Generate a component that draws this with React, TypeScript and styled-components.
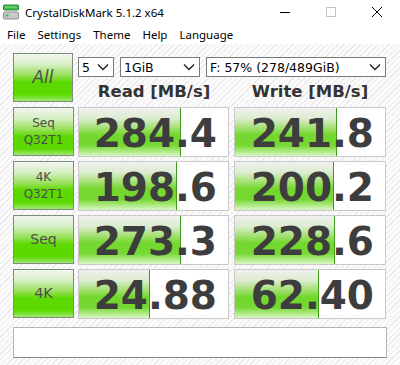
import React from "react";
import styled, { createGlobalStyle } from "styled-components";

const GlobalStyle = createGlobalStyle`
    html, body {
        margin: 0;
        padding: 0;
        background: #ffffff;
    }
    body {
        width: 400px;
        height: 365px;
        overflow: hidden;
        font-family: "Noto Sans", "DejaVu Sans", sans-serif;
    }
`;

const Window = styled.div`
    width: 400px;
    height: 365px;
    display: flex;
    flex-direction: column;
    background: #ffffff;
`;

const TitleBar = styled.div`
    height: 24px;
    display: flex;
    align-items: center;
    padding-left: 3px;
    color: #000;
    font-size: 11.5px;
`;

const AppTitle = styled.span`
    margin-left: 6px;
    flex: 1;
`;

const WinButton = styled.div`
    width: 46px;
    height: 24px;
    display: flex;
    align-items: center;
    justify-content: center;
`;

const MenuBar = styled.div`
    height: 20px;
    display: flex;
    align-items: center;
    font-size: 11.5px;
    padding-left: 1px;
`;

const MenuItem = styled.span`
    padding: 0 6px;
`;

const Panel = styled.div`
    flex: 1;
    padding: 9px 13px 0 13px;
    background-color: #fbfbfb;
    background-image: repeating-linear-gradient(
        135deg,
        #fbfbfb 0px,
        #fbfbfb 3px,
        #eaeaea 3px,
        #eaeaea 4px
    );
`;

const Grid = styled.div`
    display: grid;
    grid-template-columns: 61px 152px 152px;
    grid-auto-rows: 50px;
    column-gap: 4px;
    row-gap: 4px;
    & > :nth-child(3n + 1) {
        margin-right: 1px;
    }
`;

const SideButton = styled.div<{ $size: number; $italic?: boolean }>`
    box-sizing: border-box;
    height: 49px;
    border: 1px solid #7d8c7b;
    background: linear-gradient(
        to bottom,
        #f2f6ef 0%,
        #d6efc4 22%,
        #99e15c 45%,
        #5cd900 60%,
        #5cd900 86%,
        #9fe870 100%
    );
    display: flex;
    flex-direction: column;
    align-items: center;
    justify-content: center;
    color: #4e4e4e;
    font-family: "DejaVu Sans", sans-serif;
    font-size: ${(p) => p.$size}px;
    font-style: ${(p) => (p.$italic ? "italic" : "normal")};
    line-height: 1.4;
`;

const HeadArea = styled.div`
    grid-column: 2 / span 2;
    display: grid;
    grid-template-columns: 152px 152px;
    column-gap: 4px;
    grid-template-rows: 20px 1fr;
    padding-top: 4px;
`;

const ComboRow = styled.div`
    grid-column: 1 / span 2;
    display: flex;
    gap: 6px;
`;

const Combo = styled.div<{ $w: number }>`
    box-sizing: border-box;
    width: ${(p) => p.$w}px;
    height: 20px;
    border: 1px solid #7a7a7a;
    background: #ffffff;
    display: flex;
    align-items: center;
    padding-left: 3px;
    padding-right: 4px;
    font-family: "DejaVu Sans", sans-serif;
    font-size: 12.5px;
    color: #000;
    & > span {
        flex: 1;
        white-space: nowrap;
    }
`;

const ColHeader = styled.div`
    display: flex;
    align-items: center;
    justify-content: center;
    font-family: "DejaVu Sans", sans-serif;
    font-weight: bold;
    font-size: 16.5px;
    color: #333333;
    padding-top: 2px;
`;

const Cell = styled.div`
    position: relative;
    box-sizing: border-box;
    border: 1px solid #c9c9c9;
    background: #ffffff;
    display: flex;
    align-items: center;
    justify-content: flex-end;
    padding-right: 11px;
    overflow: hidden;
`;

const Fill = styled.div`
    position: absolute;
    left: 0;
    top: 0;
    bottom: 0;
    border-right: 1px solid #3f9a1a;
    background: linear-gradient(
        to bottom,
        #f0f0f0 0%,
        #dcecd0 22%,
        #a2e070 42%,
        #74d72e 56%,
        #76d833 78%,
        #b6ec90 92%,
        #d9f6c4 100%
    );
`;

const Value = styled.span`
    position: relative;
    font-family: "DejaVu Sans", sans-serif;
    font-weight: bold;
    font-size: 39px;
    color: #3d3d3d;
    line-height: 1;
    margin-top: 2px;
`;

const Comment = styled.div`
    box-sizing: border-box;
    margin-top: 8px;
    height: 31px;
    border: 1px solid #b4b4b4;
    border-bottom-color: #8a8a8a;
    background: #ffffff;
`;

const Chevron = () => (
    <svg width="12" height="8" viewBox="0 0 12 8">
        <path d="M1 1.5 L6 6.5 L11 1.5" fill="none" stroke="#222" strokeWidth="1.4" />
    </svg>
);

const DiskIcon = () => (
    <svg width="16" height="16" viewBox="0 0 16 16">
        <rect x="0.5" y="1" width="15" height="5" rx="1" fill="#3fb54a" stroke="#2c8a34" />
        <rect x="2" y="2.5" width="12" height="1.2" fill="#7fdc86" />
        <rect x="0.5" y="8" width="15" height="7" rx="1" fill="#c9c9c9" stroke="#8f8f8f" />
        <rect x="2.5" y="10.5" width="3" height="2" fill="#3fb54a" />
    </svg>
);

type Row = {
    label: string[];
    size: number;
    read: string;
    readPct: number;
    write: string;
    writePct: number;
};

const rows: Row[] = [
    { label: ["Seq", "Q32T1"], size: 12, read: "284.4", readPct: 68, write: "241.8", writePct: 67 },
    { label: ["4K", "Q32T1"], size: 12, read: "198.6", readPct: 65, write: "200.2", writePct: 65 },
    { label: ["Seq"], size: 14, read: "273.3", readPct: 68, write: "228.6", writePct: 66 },
    { label: ["4K"], size: 14.5, read: "24.88", readPct: 47, write: "62.40", writePct: 55 },
];

const menu = ["File", "Settings", "Theme", "Help", "Language"];

export default function App() {
    return (
        <>
            <GlobalStyle />
            <Window>
                <TitleBar>
                    <DiskIcon />
                    <AppTitle>CrystalDiskMark 5.1.2 x64</AppTitle>
                    <WinButton>
                        <svg width="12" height="12" viewBox="0 0 12 12">
                            <path d="M1 6.5 H11" stroke="#000" strokeWidth="1" />
                        </svg>
                    </WinButton>
                    <WinButton>
                        <svg width="12" height="12" viewBox="0 0 12 12">
                            <rect x="1.5" y="1.5" width="9" height="9" fill="none" stroke="#c4c4c4" />
                        </svg>
                    </WinButton>
                    <WinButton>
                        <svg width="12" height="12" viewBox="0 0 12 12">
                            <path d="M1 1 L11 11 M11 1 L1 11" stroke="#000" strokeWidth="1" />
                        </svg>
                    </WinButton>
                </TitleBar>
                <MenuBar>
                    {menu.map((m) => (
                        <MenuItem key={m}>{m}</MenuItem>
                    ))}
                </MenuBar>
                <Panel>
                    <Grid>
                        <SideButton $size={17} $italic>All</SideButton>
                        <HeadArea>
                            <ComboRow>
                                <Combo $w={36}><span>5</span><Chevron /></Combo>
                                <Combo $w={80}><span>1GiB</span><Chevron /></Combo>
                                <Combo $w={180}><span>F: 57% (278/489GiB)</span><Chevron /></Combo>
                            </ComboRow>
                            <ColHeader>Read [MB/s]</ColHeader>
                            <ColHeader>Write [MB/s]</ColHeader>
                        </HeadArea>
                        {rows.map((r) => (
                            <React.Fragment key={r.label.join("")}>
                                <SideButton $size={r.size}>
                                    {r.label.map((l) => (
                                        <span key={l}>{l}</span>
                                    ))}
                                </SideButton>
                                <Cell>
                                    <Fill style={{ width: `${r.readPct}%` }} />
                                    <Value>{r.read}</Value>
                                </Cell>
                                <Cell>
                                    <Fill style={{ width: `${r.writePct}%` }} />
                                    <Value>{r.write}</Value>
                                </Cell>
                            </React.Fragment>
                        ))}
                    </Grid>
                    <Comment />
                </Panel>
            </Window>
        </>
    );
}
